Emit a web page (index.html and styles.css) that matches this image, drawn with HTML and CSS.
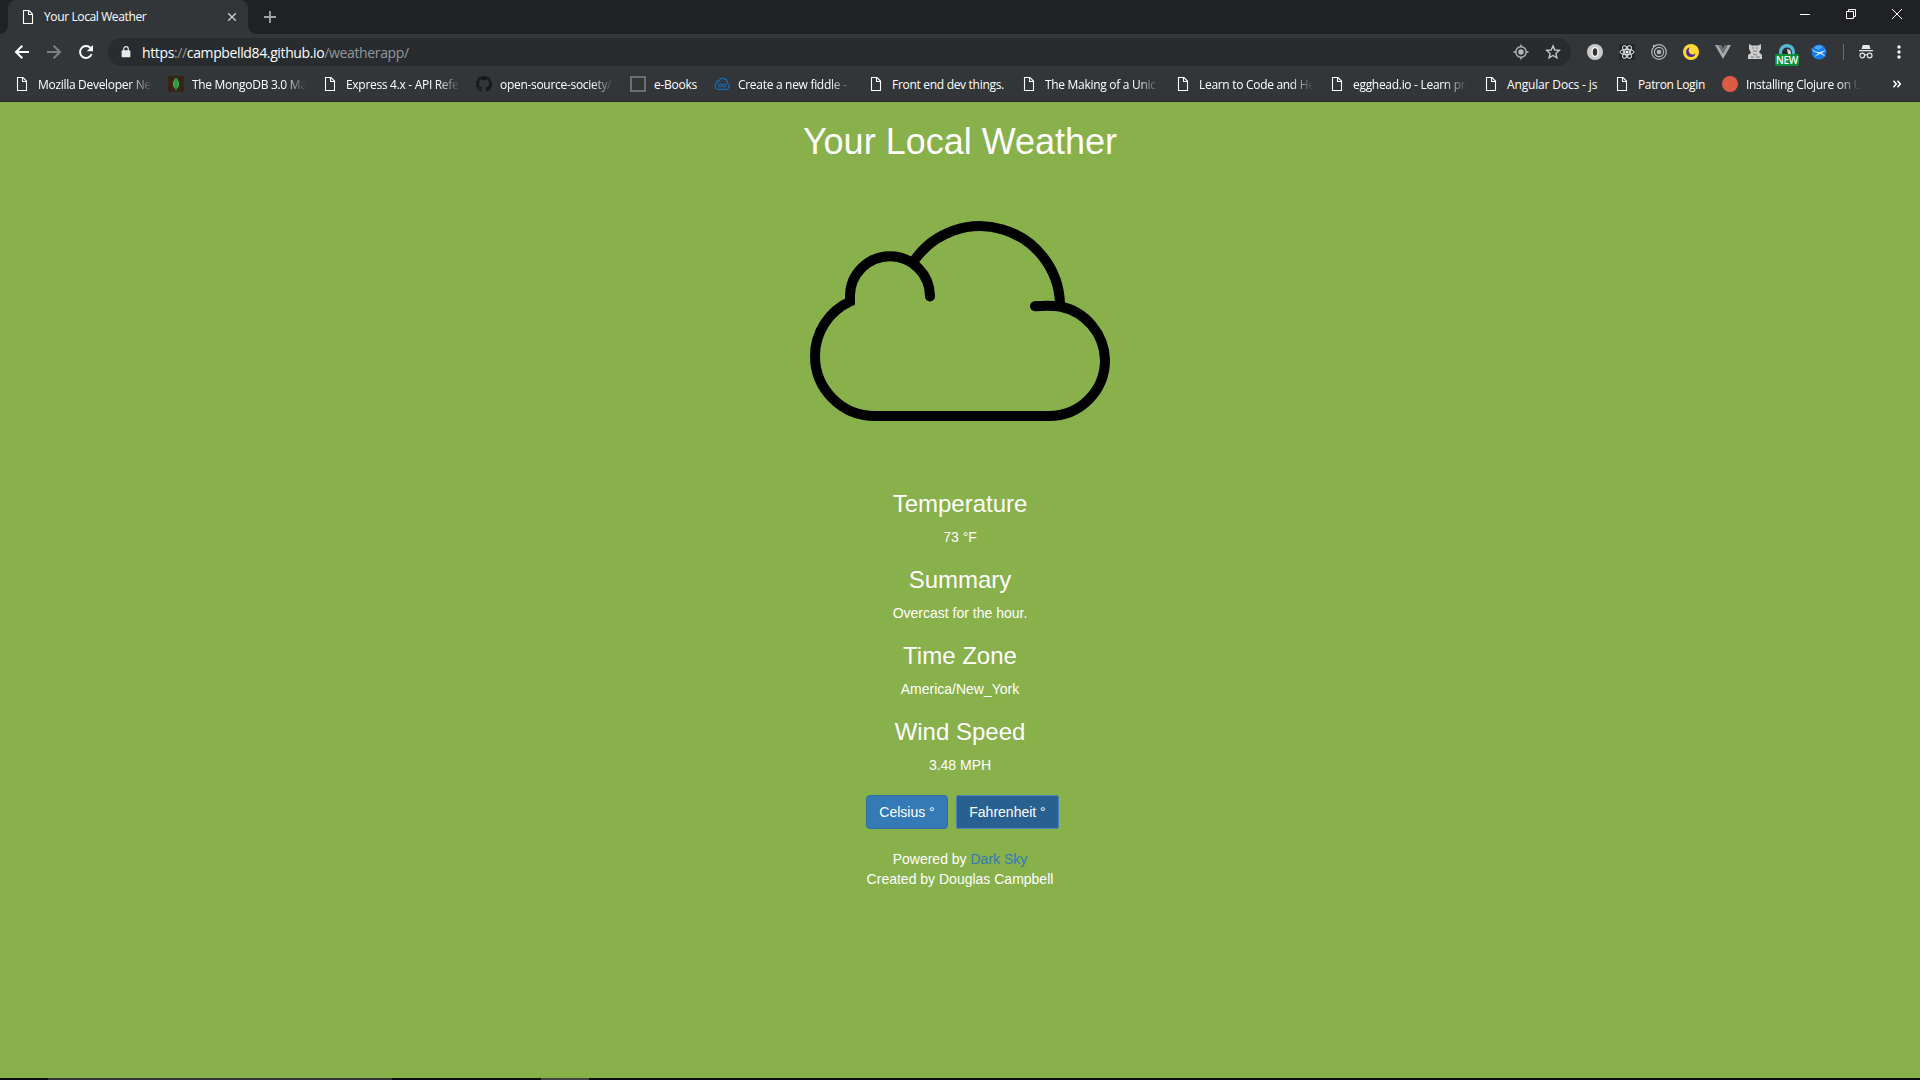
FILE: index.html
```html
<!DOCTYPE html>
<html lang="en">
<head>
<meta charset="utf-8">
<title>Your Local Weather</title>
<link rel="stylesheet" href="styles.css">
</head>
<body>
<svg width="0" height="0" class="defs">
  <symbol id="page" viewBox="0 0 16 16"><path d="M3.500 1.500h5.500l3.500 3.500v9.500h-9z M8.500 1.500v4h4" fill="none" stroke="#fff" stroke-width="1.100"/></symbol>
</svg>
<div class="browser">
  <header class="tabstrip">
    <div class="tab">
      <svg class="i16"><use href="#page"/></svg>
      <span class="tab-title">Your Local Weather</span>
      <svg class="i16" viewBox="0 0 16 16"><path d="M4.2 4.2l7.6 7.6M11.8 4.2l-7.6 7.6" stroke="#c8cacc" stroke-width="1.4"/></svg>
    </div>
    <svg class="newtab" viewBox="0 0 16 16"><path d="M8 2v12M2 8h12" stroke="#a2a5a8" stroke-width="1.8"/></svg>
    <div class="window-buttons">
      <svg viewBox="0 0 12 12"><path d="M1 6.5h10" stroke="#fff"/></svg>
      <svg viewBox="0 0 12 12"><path d="M1.5 3.5h7v7h-7zM3.5 3.5v-2h7v7h-2" fill="none" stroke="#fff"/></svg>
      <svg viewBox="0 0 12 12"><path d="M1 1l10 10M11 1L1 11" stroke="#fff"/></svg>
    </div>
  </header>
  <nav class="toolbar">
    <svg class="nav" viewBox="0 0 16 16"><path d="M15 8H2.5M8.3 1.7L2 8l6.3 6.3" fill="none" stroke="#fff" stroke-width="2"/></svg>
    <svg class="nav" viewBox="0 0 16 16"><path d="M1 8h12.5M7.7 1.7L14 8l-6.3 6.3" fill="none" stroke="#7d8083" stroke-width="2"/></svg>
    <svg class="nav" viewBox="0 0 16 16"><path d="M13.6 10.2A6 6 0 1 1 12.6 4" fill="none" stroke="#fff" stroke-width="2"/><path d="M15 1v6.2H8.8z" fill="#fff"/></svg>
    <div class="omnibox">
      <svg class="lock" viewBox="0 0 16 16"><path d="M4 6h8a1 1 0 0 1 1 1v6a1 1 0 0 1-1 1H4a1 1 0 0 1-1-1V7a1 1 0 0 1 1-1z" fill="#e8e9ee"/><path d="M5.400 7V4.400a2.600 2.600 0 0 1 5.200 0V7" fill="none" stroke="#e8e9ee" stroke-width="1.3"/></svg>
      <span class="url">https<i>://</i>campbelld84.github.io<i>/weatherapp/</i></span>
      <svg class="i16" viewBox="0 0 16 16"><circle cx="8" cy="8" r="5.2" fill="none" stroke="#b4b7ba" stroke-width="1.4"/><circle cx="8" cy="8" r="2.7" fill="#b4b7ba"/><path d="M8 .5V3M8 13v2.500M.5 8H3M13 8h2.500" stroke="#b4b7ba" stroke-width="1.4"/></svg>
      <svg class="i16" viewBox="0 0 16 16"><path d="M8 1.900l1.800 4.100 4.500.4-3.400 3 1 4.400L8 11.500l-3.900 2.300 1-4.400-3.400-3 4.500-.4z" fill="none" stroke="#c4c6c9" stroke-width="1.4"/></svg>
    </div>
    <div class="extensions">
      <svg viewBox="0 0 16 16"><circle cx="8" cy="8" r="8" fill="#c9c9c9"/><ellipse cx="8" cy="8" rx="3" ry="4.600" fill="#303336" stroke="#f2f2f2" stroke-width="1.5"/></svg>
      <svg viewBox="0 0 16 16"><path fill="#25282b" d="M0 0h16v16H0z"/><g fill="none" stroke="#e6e6e6" stroke-width="1"><ellipse cx="8" cy="8" rx="7" ry="2.700"/><ellipse cx="8" cy="8" rx="7" ry="2.700" transform="rotate(60 8 8)"/><ellipse cx="8" cy="8" rx="7" ry="2.700" transform="rotate(120 8 8)"/></g><circle cx="8" cy="8" r="1.500" fill="#fff"/></svg>
      <svg viewBox="0 0 16 16"><g fill="none" stroke="#b5b5b5"><circle cx="8" cy="8" r="7.300" stroke-width="1.200"/><circle cx="8" cy="8" r="4.600" stroke-width="1.200"/></g><circle cx="8" cy="8" r="2.300" fill="#b5b5b5"/><circle cx="3" cy="2" r="1.200" fill="#b5b5b5"/></svg>
      <svg viewBox="0 0 16 16"><circle cx="8" cy="8" r="8" fill="#fdd835"/><path d="M7 3.300a4.900 4.900 0 1 0 5.700 6.200A3.500 3.500 0 0 1 7 3.300z" fill="#4a2a91"/></svg>
      <svg viewBox="0 0 16 16"><path d="M0 1h3.300L8 9.200 12.700 1H16L8 15z" fill="#aaa"/><path d="M3.300 1h2.900L8 4.200 9.800 1h2.900L8 9.200z" fill="#707070"/></svg>
      <svg viewBox="0 0 16 16"><path d="M2 0l3 1.500h6L14 0v5l-2 3 3 3v4H1v-4l3-2-2-4z" fill="#cecece"/><path d="M5 4h2M9 4h2M6 7h4M6 10l4 1M4 13h3m2 0h4" stroke="#777" stroke-width="1"/></svg>
      <div class="ext-new"><svg viewBox="0 0 16 16"><circle cx="8" cy="8" r="8" fill="#55b9d5"/><circle cx="8" cy="8.500" r="5" fill="#272a2d"/><path d="M8 5a4 4 0 0 1 4 5H9z" fill="#d6d6d6"/></svg><b>NEW</b></div>
      <svg viewBox="0 0 16 16"><circle cx="8" cy="8" r="7.400" fill="#157df2"/><path d="M3 4a7 7 0 0 1 9-1.500L8 6z" fill="#4aa5fa"/><path d="M0 3.500c3 4 6 5 8.500 4.500L15.500 6 11 9l4 4-5.500-3.300L3 13l4.500-4C4 9 1 6.500 0 3.500z" fill="#c9e9ff"/></svg>
    </div>
    <span class="divider"></span>
    <svg class="i16 incognito" viewBox="0 0 16 16"><path d="M4.700 1h6.600l1.200 4H3.500zM1 6h14v1.300H1z" fill="#e5e6e7"/><g fill="none" stroke="#e5e6e7" stroke-width="1.200"><circle cx="4.300" cy="11.500" r="2.300"/><circle cx="11.700" cy="11.500" r="2.300"/><path d="M6.600 11q1.400-.8 2.800 0"/></g></svg>
    <svg class="i16" viewBox="0 0 16 16"><g fill="#f1f2f2"><circle cx="8" cy="3" r="1.700"/><circle cx="8" cy="8" r="1.700"/><circle cx="8" cy="13" r="1.700"/></g></svg>
  </nav>
  <nav class="bookmarks">
    <a><svg class="i16"><use href="#page"/></svg><span class="fade">Mozilla Developer Net</span></a>
    <a><svg class="i16" viewBox="0 0 16 16"><path fill="#392217" d="M0 0h16v16H0z"/><path d="M8 1.500c5 5 3.500 9.500 0 12-3.500-2.500-5-7 0-12z" fill="#3fa648"/><path d="M8 2v13" stroke="#1f7f35"/></svg><span class="fade">The MongoDB 3.0 Ma</span></a>
    <a><svg class="i16"><use href="#page"/></svg><span class="fade">Express 4.x - API Refe</span></a>
    <a><svg class="i16" viewBox="0 0 16 16"><path d="M8 0C3.580 0 0 3.580 0 8c0 3.540 2.290 6.530 5.470 7.590.4.070.55-.17.55-.38 0-.19-.01-.82-.01-1.490-2.010.37-2.530-.49-2.690-.94-.09-.23-.48-.94-.82-1.130-.28-.15-.68-.52-.01-.53.63-.01 1.080.58 1.230.82.72 1.210 1.870.87 2.330.66.07-.52.28-.87.51-1.070-1.780-.2-3.640-.89-3.640-3.950 0-.87.31-1.590.82-2.150-.08-.2-.36-1.020.08-2.120 0 0 .67-.21 2.200.82a7.600 7.600 0 0 1 4 0c1.530-1.040 2.200-.82 2.200-.82.44 1.100.16 1.920.08 2.120.51.56.82 1.270.82 2.150 0 3.070-1.870 3.750-3.650 3.950.29.25.54.73.54 1.480 0 1.070-.01 1.930-.01 2.200 0 .21.15.46.55.38A8.010 8.010 0 0 0 16 8c0-4.420-3.580-8-8-8z" fill="#16191c"/></svg><span class="fade">open-source-society/</span></a>
    <a><svg class="i16" viewBox="0 0 16 16"><path d="M1 1h14v14H1z" fill="none" stroke="#6f6f6f" stroke-width="2"/></svg><span class="ebooks">e-Books</span></a>
    <a><svg class="i16" viewBox="0 0 16 16"><path d="M4 13.300a3.300 3.300 0 0 1-1.500-6A2.200 2.200 0 0 1 5 4.800a4.400 4.400 0 0 1 8.300 2.600 3.100 3.100 0 0 1-1.300 5.900z" fill="none" stroke="#1769b5" stroke-width="1.300"/><path d="M8 9.500C6.500 7.500 4.500 7.700 4.500 9.500s2 2 3.500 0 3.500-1.800 3.500 0-2 2-3.500 0z" fill="none" stroke="#1769b5" stroke-width="1.200"/></svg><span class="fade">Create a new fiddle -</span></a>
    <a><svg class="i16"><use href="#page"/></svg><span class="frontend">Front end dev things.</span></a>
    <a><svg class="i16"><use href="#page"/></svg><span class="fade">The Making of a Unic</span></a>
    <a><svg class="i16"><use href="#page"/></svg><span class="fade">Learn to Code and He</span></a>
    <a><svg class="i16"><use href="#page"/></svg><span class="fade">egghead.io - Learn pr</span></a>
    <a><svg class="i16"><use href="#page"/></svg><span class="angular">Angular Docs - js</span></a>
    <a><svg class="i16"><use href="#page"/></svg><span class="patron">Patron Login</span></a>
    <a><svg class="i16" viewBox="0 0 16 16"><circle cx="8" cy="8" r="8" fill="#dd5a43"/></svg><span class="fade">Installing Clojure on U</span></a>
    <svg class="more" viewBox="0 0 10 10"><path d="M1.500 1.800L4.300 5 1.500 8.200M5.500 1.800L8.300 5 5.500 8.200" fill="none" stroke="#fff" stroke-width="1.500"/></svg>
  </nav>
</div>
<main>
  <h1>Your Local Weather</h1>
  <svg class="cloud" viewBox="0 0 300 200"><g fill="none" stroke="#000" stroke-width="10"><path d="M104 40A80 80 0 0 1 250 83"/><path d="M225 85.300Q239 84 250 85.500A56 56 0 0 1 295 139A56 56 0 0 1 239 195H65A60 60 0 0 1 5 135A60 60 0 0 1 40 80.500V75A40 40 0 0 1 120 75.500"/></g><circle cx="225" cy="85.300" r="5"/><circle cx="120" cy="75.500" r="5"/></svg>
  <h3>Temperature</h3>
  <p>73 °F</p>
  <h3>Summary</h3>
  <p>Overcast for the hour.</p>
  <h3>Time Zone</h3>
  <p>America/New_York</p>
  <h3>Wind Speed</h3>
  <p>3.48 MPH</p>
  <div class="buttons"><button class="btn">Celsius °</button><button class="btn active">Fahrenheit °</button></div>
  <footer>Powered by <a>Dark Sky</a><br>Created by Douglas Campbell</footer>
</main>
<div class="taskbar"><span></span><span></span></div>
</body>
</html>
```
FILE: styles.css
```css
* { box-sizing: border-box; }
body { margin: 0; height: 1080px; overflow: hidden; display: flex; flex-direction: column; background: #88b04b; color: #fff; font: 14px/20px "Liberation Sans", Arial, sans-serif; }
svg { display: block; flex: none; overflow: visible; }
.defs { position: absolute; }
.i16 { width: 16px; height: 16px; }
.browser { flex: none; height: 102px; background: #323639; border-bottom: 1px solid #26292b; font-family: "Open Sans", "Noto Sans", sans-serif; }
.tabstrip { height: 34px; display: flex; align-items: center; background: #202124; padding-left: 8px; }
.tab { position: relative; width: 240px; height: 34px; display: flex; align-items: center; padding: 0 8px 0 12px; background: #323639; border-radius: 8px 8px 0 0; font-size: 12px; }
.tab::before, .tab::after { content: ""; position: absolute; bottom: 0; width: 8px; height: 8px; }
.tab::before { left: -8px; background: radial-gradient(circle at 0 0, #202124 7.5px, #323639 8px); }
.tab::after { right: -8px; background: radial-gradient(circle at 100% 0, #202124 7.5px, #323639 8px); }
.tab-title { flex: 1; margin-left: 8px; letter-spacing: -0.38px; white-space: nowrap; }
.newtab { width: 16px; height: 16px; margin-left: 14px; }
.window-buttons { margin: 0 17px 6px auto; display: flex; gap: 34px; }
.window-buttons svg { width: 12px; height: 12px; }
.toolbar { height: 36px; display: flex; align-items: center; padding: 0 13px 0 14px; }
.nav { width: 16px; height: 16px; margin-right: 16px; }
.omnibox { flex: none; width: 1463px; height: 28px; margin-left: -2px; padding: 0 10px; border-radius: 14px; background: #282c2f; display: flex; align-items: center; gap: 16px; }
.lock { width: 14px; height: 14px; margin-left: 1px; }
.url { flex: 1; margin-left: -7px; padding-top: 1px; font-size: 14px; letter-spacing: -0.37px; }
.url i { font-style: normal; color: #92989d; }
.extensions { display: flex; gap: 16px; margin-left: 16px; }
.extensions svg { width: 16px; height: 16px; }
.ext-new { position: relative; }
.ext-new b { position: absolute; left: -4px; top: 10px; width: 24px; height: 12px; border-radius: 2px; background: #0c9039; font-size: 10px; line-height: 12px; letter-spacing: -0.3px; text-align: center; font-weight: 600; }
.divider { flex: none; width: 1px; height: 16px; margin: 0 14px 0 16px; background: #6a6d70; }
.incognito { margin-right: 17px; }
.bookmarks { height: 31px; display: flex; align-items: center; padding: 0 18px 3px 14px; gap: 14px; font-size: 12px; letter-spacing: -0.3px; }
.bookmarks a { display: flex; align-items: center; gap: 8px; white-space: nowrap; }
.bookmarks span { flex: none; padding-top: 1px; }
.bookmarks .fade { width: 116px; -webkit-mask-image: linear-gradient(90deg, #000 92px, transparent 114px); mask-image: linear-gradient(90deg, #000 92px, transparent 114px); }
.bookmarks .ebooks { width: 46px; letter-spacing: -0.25px; }
.bookmarks .frontend { width: 115px; }
.bookmarks .angular { width: 93px; letter-spacing: -0.15px; }
.bookmarks .patron { width: 70px; letter-spacing: -0.35px; }
.more { width: 10px; height: 10px; margin-left: auto; }
main { flex: 1; min-height: 0; display: flex; flex-direction: column; align-items: center; }
h1, h3, p { margin: 0; font-weight: 400; }
h1 { margin-top: 20px; font-size: 36px; line-height: 40px; }
.cloud { width: 300px; height: 200px; margin: 59px 0 50px; }
h3 { margin: 20px 0 10px; font-size: 24px; line-height: 26px; }
.buttons { display: flex; gap: 8px; margin: 20px 0 20px 5px; }
.btn { width: 82px; height: 34px; padding: 0; font: inherit; color: #fff; background: #337ab7; border: 1px solid #2e6da4; border-radius: 4px; }
.btn.active { width: 103px; background: #286090; border-color: #204d74; border-radius: 3px; outline: 1px solid #4785c0; outline-offset: -1px; }
footer { text-align: center; }
footer a { color: #337ab7; }
.taskbar { flex: none; height: 2px; background: #0d0c0b; display: flex; padding-left: 48px; gap: 149px; }
.taskbar span { width: 344px; background: #343436; }
.taskbar span + span { width: 48px; background: #444; }
```
